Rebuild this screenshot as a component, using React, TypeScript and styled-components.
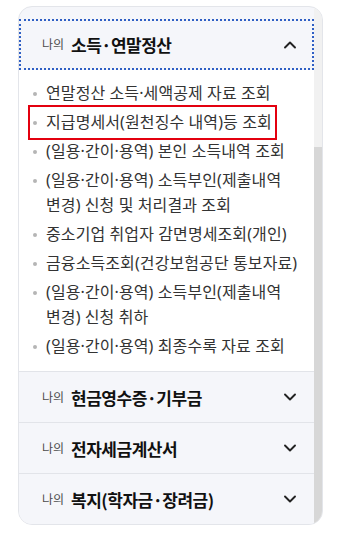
import React from "react";
import styled, { createGlobalStyle } from "styled-components";

const Global = createGlobalStyle`
  html, body { margin: 0; padding: 0; background: #ffffff; }
  body { font-family: "Noto Sans CJK KR", "Noto Sans", sans-serif; }
  * { box-sizing: border-box; }
`;

const Page = styled.div`
  padding: 6px 0 0 18px;
  width: 339px;
`;

const Card = styled.div`
  width: 305px;
  display: flex;
  border: 1px solid #e3e5ea;
  border-radius: 14px;
  overflow: hidden;
  background: #f5f6fa;
`;

const Content = styled.div`
  flex: 1;
  padding-top: 12px;
  display: flex;
  flex-direction: column;
`;

const Scrollbar = styled.div`
  width: 8px;
  display: flex;
  flex-direction: column;
  background: #f1f1f1;
`;

const Thumb = styled.div<{ $top: number }>`
  margin-top: ${(p) => p.$top}px;
  flex: 1;
  background: #d7d7d7;
`;

const Section = styled.div<{ $first?: boolean }>`
  border-top: ${(p) => (p.$first ? "none" : "1px solid #e2e4e9")};
`;

const Header = styled.div<{ $focused?: boolean }>`
  height: ${(p) => (p.$focused ? 51 : 50)}px;
  display: flex;
  align-items: center;
  padding: 0 18px 0 23px;
  background: #f5f6fa;
  outline: ${(p) => (p.$focused ? "2px dotted #2f5fc4" : "none")};
  outline-offset: -2px;
`;

const My = styled.span`
  font-size: 12px;
  color: #4a4a4a;
  margin-right: 7px;
  margin-top: -2px;
`;

const Title = styled.span`
  flex: 1;
  font-size: 17px;
  font-weight: 700;
  color: #111;
  letter-spacing: -0.5px;
`;

const Chevron = ({ up }: { up?: boolean }) => (
  <svg width="12" height="8" viewBox="0 0 12 8" fill="none">
    <path
      d={up ? "M1 6.5 L6 1.5 L11 6.5" : "M1 1.5 L6 6.5 L11 1.5"}
      stroke="#222"
      strokeWidth="1.9"
      strokeLinecap="round"
      strokeLinejoin="round"
    />
  </svg>
);

const Body = styled.ul`
  margin: 0;
  list-style: none;
  background: #ffffff;
  padding: 10.5px 12px 12.5px 14px;
  display: flex;
  flex-direction: column;
  gap: 4px;
`;

const Item = styled.li<{ $marked?: boolean }>`
  display: flex;
  align-items: flex-start;
  font-family: "Noto Sans", "Noto Sans CJK KR", sans-serif;
  font-size: 16px;
  line-height: 25px;
  color: #333;
  letter-spacing: 0.1px;
  word-break: keep-all;
  width: ${(p) => (p.$marked ? "fit-content" : "auto")};
  outline: ${(p) => (p.$marked ? "2px solid #e3000f" : "none")};
  outline-offset: 3px;

  &::before {
    content: "";
    flex: none;
    width: 4px;
    height: 4px;
    border-radius: 50%;
    background: #b5b5b5;
    margin: 11px 9px 0 0;
  }
`;

const items = [
  "연말정산 소득·세액공제 자료 조회",
  "지급명세서(원천징수 내역)등 조회",
  "(일용·간이·용역) 본인 소득내역 조회",
  "(일용·간이·용역) 소득부인(제출내역 변경) 신청 및 처리결과 조회",
  "중소기업 취업자 감면명세조회(개인)",
  "금융소득조회(건강보험공단 통보자료)",
  "(일용·간이·용역) 소득부인(제출내역 변경) 신청 취하",
  "(일용·간이·용역) 최종수록 자료 조회",
];

const closed = ["현금영수증·기부금", "전자세금계산서", "복지(학자금·장려금)"];

export default function App() {
  return (
    <>
      <Global />
      <Page>
        <Card>
          <Content>
            <Section $first>
              <Header $focused>
                <My>나의</My>
                <Title>소득·연말정산</Title>
                <Chevron up />
              </Header>
              <Body>
                {items.map((t, i) => (
                  <Item key={i} $marked={i === 1}>
                    {t}
                  </Item>
                ))}
              </Body>
            </Section>
            {closed.map((t) => (
              <Section key={t}>
                <Header>
                  <My>나의</My>
                  <Title>{t}</Title>
                  <Chevron />
                </Header>
              </Section>
            ))}
          </Content>
          <Scrollbar>
            <Thumb $top={140} />
          </Scrollbar>
        </Card>
      </Page>
    </>
  );
}
